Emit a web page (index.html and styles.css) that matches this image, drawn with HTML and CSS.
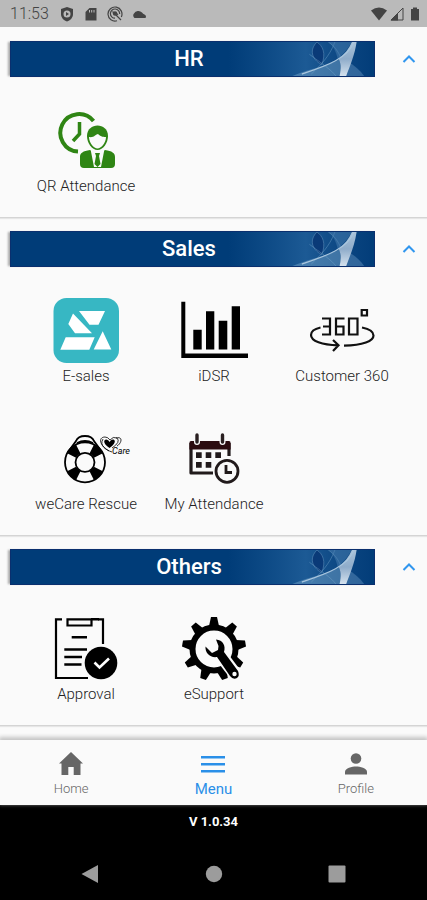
FILE: index.html
```html
<!DOCTYPE html>
<html lang="en">
<head>
<meta charset="utf-8">
<meta name="viewport" content="width=device-width, initial-scale=1">
<title>Menu</title>
<link rel="stylesheet" href="styles.css">
</head>
<body>
<svg class="defs" aria-hidden="true">
  <defs>
    <linearGradient id="glow" x1="0" x2="1" y1="0" y2="0">
      <stop offset="0" stop-color="#2a6aa5" stop-opacity="0"/>
      <stop offset=".55" stop-color="#2f6ea8" stop-opacity=".6"/>
      <stop offset="1" stop-color="#0d4380" stop-opacity=".3"/>
    </linearGradient>
    <linearGradient id="blade" x1="0" x2="0" y1="0" y2="1">
      <stop offset="0" stop-color="#a9c2d9"/>
      <stop offset=".5" stop-color="#8facca"/>
      <stop offset="1" stop-color="#d5e2ee"/>
    </linearGradient>
    <symbol id="waves" viewBox="0 0 150 36">
      <rect width="150" height="36" fill="url(#glow)"/>
      <g transform="translate(2 0)">
        <path d="M66 36C88 27 108 24 116 18L118 36Z" fill="#6f9fc6" opacity=".5"/>
        <path d="M92 0C84 8 86 18 97 24C102 12 98 4 92 0Z" fill="#0a3a78"/>
        <path d="M92 0C84 8 86 18 97 24C102 12 98 4 92 0ZM104 0C112 5 117 14 118 20M84 13C96 22 108 30 112 36M111 0C105 16 96 24 86 34" fill="none" stroke="#76a5cc" stroke-opacity=".45"/>
        <path d="M104 0H129C123 10 118 15 114 18C112 9 109 4 104 0Z" fill="#4a7fb2" opacity=".5"/>
        <path d="M124 20C132 25 138 30 142 36H122Z" fill="#5c8cba" opacity=".5"/>
        <path d="M129 0H134C132 14 127 25 123 36H116C118 28 117 21 115 18C121 13 126 7 129 0Z" fill="url(#blade)"/>
        <path d="M76 34C102 25 124 18 131 0" fill="none" stroke="#a9c6de" stroke-width="1.300"/>
      </g>
    </symbol>
    <symbol id="chevron" viewBox="0 0 16 16"><path d="M2.500 11L8 5.500L13.500 11" fill="none" stroke="#3096ee" stroke-width="2"/></symbol>
  </defs>
</svg>

<header class="status">
  <div class="status-group">
    <time class="clock">11:53</time>
    <svg viewBox="0 0 16 16" width="16" height="16"><path d="M8 1L14 3V8C14 12 11 14.500 8 15.500C5 14.500 2 12 2 8V3Z"/><circle cx="8" cy="8" r="3.500" fill="#bababa"/><path d="M7 6L10 8L7 10Z"/></svg>
    <svg viewBox="0 0 16 16" width="16" height="16"><path d="M6.500 2H13.500V14.500H2.500V6Z"/><path d="M6.500 4V6.500M8.700 4V6.500M11 4V6.500" stroke="#bababa"/></svg>
    <svg viewBox="0 0 16 16" width="16" height="16"><g fill="none" stroke="#444" stroke-width="1.200"><path d="M10 14.700A7 7 0 1 1 14.300 11M8 12.200A4.600 4.600 0 1 1 12.600 8"/><path d="M5.500 5.500L14 14M9 6.500L11 9"/></g><circle cx="8" cy="7.500" r="2.200"/></svg>
    <svg viewBox="0 0 16 16" width="16" height="16"><path d="M3.500 12A3 3 0 0 1 3 7.500A5 5 0 0 1 11 6.500Q12 8 13.500 8.500A2.500 2.500 0 0 1 14.500 12Z"/></svg>
  </div>
  <div class="status-group right">
    <svg viewBox="0 0 16 16" width="16" height="16"><path d="M0 4.500Q8-1.500 16 4.500L8 14.500Z"/></svg>
    <svg viewBox="0 0 16 16" width="16" height="16"><path d="M2 14L14 2V14Z" fill="none" stroke="#444"/><path d="M1.500 14.500L9 7V14.500Z"/></svg>
    <svg viewBox="0 0 16 16" width="16" height="16"><path d="M4 3H6V1.500H10V3H12V14.500H4Z"/></svg>
  </div>
</header>

<main>
  <section>
    <h2><button class="section-head" type="button" aria-expanded="true">
      <span class="banner"><svg class="art"><use href="#waves"/></svg><span class="title">HR</span></span>
      <svg class="chevron"><use href="#chevron"/></svg>
    </button></h2>
    <div class="tiles">
      <a class="tile" href="#qr">
        <svg viewBox="0 0 128 66" fill="#2f8514">
          <path d="M71.500 14A18.700 18.700 0 1 0 56 44.500" fill="none" stroke="#2f8514" stroke-width="4"/>
          <path d="M57.500 15V27L51 34" fill="none" stroke="#2f8514" stroke-width="3.500"/>
          <ellipse cx="75.500" cy="30.500" rx="12.500" ry="14" fill="#fafafa"/>
          <path d="M65 29C65 15 86 15 86 29C86 36 81 43 75.500 43C70 43 65 36 65 29Z"/>
          <path d="M67 30C72 31 74 27 76 27C79 30 82 30 84 30C84 36 79 41.500 75.500 41.500C72 41.500 67 36 67 30Z" fill="#fafafa"/>
          <path d="M68 43L75.500 47L83 43C90 44 93 46 93 50V57Q93 61 89 61H62Q58 61 58 57V50C58 46 61 44 68 43Z"/>
          <path d="M68.500 42L75.500 45L82.500 42L79 60H72Z" fill="#fafafa"/>
          <path d="M73 46H78L77 49L78.500 57L75.500 60L72.500 57L74 49Z"/>
        </svg>
        <span>QR Attendance</span>
      </a>
    </div>
  </section>

  <section>
    <h2><button class="section-head" type="button" aria-expanded="true">
      <span class="banner"><svg class="art"><use href="#waves"/></svg><span class="title">Sales</span></span>
      <svg class="chevron"><use href="#chevron"/></svg>
    </button></h2>
    <div class="tiles">
      <a class="tile" href="#esales">
        <svg viewBox="0 0 128 66">
          <rect x="31.500" y="1" width="65.500" height="65" rx="13" fill="#37b7c3"/>
          <path d="M57 14H83L76.500 27.700H67.500ZM51 16.500L70 36.300H53L46.300 27ZM43.700 40.300H72.700L67.300 52.700H38.300ZM80.700 34.300L89.300 52.500H71.700Z" fill="#fff"/>
        </svg>
        <span>E-sales</span>
      </a>
      <a class="tile" href="#idsr">
        <svg viewBox="0 0 128 66"><path d="M31.300 4.700H35.300V56.500H98V61H31.300ZM43.300 32.700H51.700V52.500H43.300ZM56 14.300H64.300V52.500H56ZM68.700 23.700H77.300V52.500H68.700ZM81.700 9.300H90V52.500H81.700Z"/></svg>
        <span>iDSR</span>
      </a>
      <a class="tile" href="#customer">
        <svg viewBox="0 0 128 66" fill="none" stroke="#111" stroke-width="2.200">
          <path d="M44 21.500H52V37.500H44M45 29.500H52M66.500 21.500H58V37.500H65.500V29.500H58M71 21.500H79.500V37.500H71Z"/>
          <path d="M83.700 13H89V18.500H83.700Z"/>
          <path d="M42.500 30.500C36 32 33 35 33 38C33 44 44 48 60 48.300M55 43L60.500 48.300L55 54M84 30.500C92 32 95.500 35 95.500 38.500C95.500 44 85 48.500 66 48.700"/>
        </svg>
        <span>Customer 360</span>
      </a>
      <a class="tile" href="#rescue">
        <svg viewBox="0 0 128 66">
          <g fill="none" stroke="#000">
            <path d="M46 27L54 16Q56 11 63 11Q70 11 72 16L80 27M55 18Q63 14 71 18" stroke-width="1.800"/>
            <circle cx="63" cy="37.300" r="20" stroke-width="1.800"/>
            <circle cx="63" cy="37.300" r="9.500" stroke-width="1.800"/>
            <circle cx="63" cy="37.300" r="15" stroke-width="10" pathLength="360" stroke-dasharray="36 54" stroke-dashoffset="-27"/>
            <path d="M87 26C76 19 77 12 83 12Q86 12 88 15Q91 11 95 13Q99 17 90 23M94 13C102 11 99 19 95 21M81 14C77 21 84 25 90 27" stroke-width=".8"/>
          </g>
          <path d="M87.500 23C80 18 82 14 84.500 14.500Q87 15 87.500 17Q89 14 91.500 14.500C95 16 91 21 87.500 23Z"/>
          <text class="logo-word" x="90" y="29">Care</text>
        </svg>
        <span>weCare Rescue</span>
      </a>
      <a class="tile" href="#attendance">
        <svg viewBox="0 0 128 66" fill="#211a1b">
          <path d="M41 18V48H63M79 18V31" fill="none" stroke="#211a1b" stroke-width="3.200" stroke-linejoin="round"/>
          <path d="M41 16H79Q80.600 16 80.600 18V24.500H39.400V18Q39.400 16 41 16Z" fill="#2b0c10"/>
          <path d="M47 10V17M72.500 10V17" stroke="#fafafa" stroke-width="6" stroke-linecap="round"/>
          <path d="M47 10V17M72.500 10V17" stroke="#2a2021" stroke-width="3.400" stroke-linecap="round"/>
          <path d="M46 27.300H51.700V33H46ZM55.700 27.300H61.300V33H55.700ZM65.300 27.300H71V33H65.300ZM46 37H51.700V42.700H46ZM55.700 37H61.300V42.700H55.700Z"/>
          <circle cx="77" cy="46.300" r="14" fill="#fafafa"/>
          <circle cx="77" cy="46.300" r="11" fill="none" stroke="#211a1b" stroke-width="2.800"/>
          <path d="M76 40V47.500H82" fill="none" stroke="#211a1b" stroke-width="2.800"/>
        </svg>
        <span>My Attendance</span>
      </a>
    </div>
  </section>

  <section>
    <h2><button class="section-head" type="button" aria-expanded="true">
      <span class="banner"><svg class="art"><use href="#waves"/></svg><span class="title">Others</span></span>
      <svg class="chevron"><use href="#chevron"/></svg>
    </button></h2>
    <div class="tiles">
      <a class="tile" href="#approval">
        <svg viewBox="0 0 128 66">
          <g fill="none" stroke="#000" stroke-width="2.200">
            <path d="M40 4.300H34V63H66M76 4.300H81V29M45.500 4.300H69.500V10.500H45.500Z"/>
            <path d="M69 4.300H77M49.700 22.300H65M42.300 34.500H65M42.300 42H60M42.300 49.500H59.500" stroke-width="2.400"/>
          </g>
          <circle cx="79" cy="48" r="16.300"/>
          <path d="M72.500 47.500L77.500 52.500L87 43.500" fill="none" stroke="#fff" stroke-width="2.600"/>
        </svg>
        <span>Approval</span>
      </a>
      <a class="tile" href="#support">
        <svg viewBox="0 0 128 66">
          <g transform="translate(64 34)">
            <circle r="21.500" fill="none" stroke="#000" stroke-width="6"/>
            <path id="tooth" d="M-5-23L-3-32H3L5-23Z"/>
            <use href="#tooth" transform="rotate(40)"/><use href="#tooth" transform="rotate(80)"/>
            <use href="#tooth" transform="rotate(120)"/><use href="#tooth" transform="rotate(160)"/>
            <use href="#tooth" transform="rotate(200)"/><use href="#tooth" transform="rotate(240)"/>
            <use href="#tooth" transform="rotate(280)"/><use href="#tooth" transform="rotate(320)"/>
          </g>
          <path d="M70 39L88 63" stroke="#fafafa" stroke-width="13"/>
          <path d="M66 24.500C73 25 76 31 74 37L88 56Q90 61 87 63Q83 65 80 61L67 42C60 43 55 38 55.500 31.500L62 38L68 35L68.500 31Z"/>
          <circle cx="84.500" cy="59" r="2.200" fill="#fafafa"/>
        </svg>
        <span>eSupport</span>
      </a>
    </div>
  </section>
</main>

<nav class="tabs">
  <a href="#home">
    <svg viewBox="0 0 32 32" width="32" height="32"><path d="M16 4L28 15.500H25.500V27H18.700V19H13.300V27H6.500V15.500H4Z"/></svg>
    <span>Home</span>
  </a>
  <a class="active" href="#menu" aria-current="page">
    <svg viewBox="0 0 32 32" width="32" height="32"><path d="M4 8H28V10.500H4ZM4 15H28V17.500H4ZM4 22H28V24.500H4Z"/></svg>
    <span>Menu</span>
  </a>
  <a href="#profile">
    <svg viewBox="0 0 32 32" width="32" height="32"><circle cx="16" cy="10.500" r="5.300"/><path d="M5 26.500V24C5 20 12 18.500 16 18.500C20 18.500 27 20 27 24V26.500Z"/></svg>
    <span>Profile</span>
  </a>
</nav>

<footer>
  <p class="version">V 1.0.34</p>
  <div class="system">
    <button type="button" aria-label="Back"><svg viewBox="0 0 20 20" width="20" height="20"><path d="M18 1V19L1.500 10Z"/></svg></button>
    <button type="button" aria-label="Home"><svg viewBox="0 0 20 20" width="20" height="20"><circle cx="10" cy="10" r="8.200"/></svg></button>
    <button type="button" aria-label="Recent apps"><svg viewBox="0 0 20 20" width="20" height="20"><rect x="1.500" y="1.500" width="17" height="17" rx="1"/></svg></button>
  </div>
</footer>
</body>
</html>
```
FILE: styles.css
```css
* { box-sizing: border-box; }

body {
  margin: 0;
  min-height: 100vh;
  display: flex;
  flex-direction: column;
  background: #fafafa;
  color: #222;
  font-family: Roboto, "Liberation Sans", sans-serif;
}

h2, p { margin: 0; }
a { color: inherit; text-decoration: none; }
button { border: 0; padding: 0; background: none; font: inherit; cursor: pointer; }
svg { display: block; }
.defs { position: absolute; width: 0; height: 0; }

.status {
  display: flex;
  justify-content: space-between;
  align-items: center;
  height: 27px;
  padding: 0 4px 0 10px;
  background: #bababa;
  color: #444;
}
.status svg { fill: #444; }
.status-group { display: flex; align-items: center; gap: 8px; }
.status-group.right { gap: 2px; }
.clock { width: 41px; font-size: 16px; line-height: 20px; font-weight: 300; }

main { flex: 1; padding: 1px 0 14px; }

section { border-bottom: 1px solid #d4d4d4; box-shadow: 0 1px 1px #e6e6e6; }

.section-head {
  display: flex;
  align-items: center;
  width: 100%;
  padding: 13px 10px 12px;
}
.banner {
  position: relative;
  flex: 1;
  height: 36px;
  background: #003c78;
  border: 1px solid #0a2f6e;
  box-shadow: -3px 0 2px -1px #aaa;
}
.art { position: absolute; right: 0; top: 0; width: 150px; height: 100%; }
.title {
  position: relative;
  display: block;
  padding-right: 7px;
  color: #fff;
  font-size: 22px;
  line-height: 34px;
  font-weight: 500;
  text-align: center;
}
.chevron { width: 16px; height: 16px; margin-left: 26px; }

.tiles {
  display: grid;
  grid-template-columns: repeat(3, 1fr);
  padding: 0 21px 0 22px;
}
.tile {
  height: 128px;
  padding-top: 18px;
  text-align: center;
  font-size: 15px;
  line-height: 18px;
  font-weight: 300;
}
.tile svg { width: 100%; height: 66px; margin-bottom: 4px; }
.tile span { display: block; white-space: nowrap; }
.logo-word { font: italic 9px Roboto, sans-serif; }

.tabs {
  position: relative;
  display: flex;
  height: 65px;
  background: #fafafa;
  box-shadow: 0 -2px 4px 1px #c4c4c4;
  color: #666;
}
.tabs a {
  flex: 1;
  display: flex;
  flex-direction: column;
  align-items: center;
  padding-top: 8px;
  font-size: 13px;
  line-height: 18px;
  font-weight: 300;
}
.tabs svg { fill: #666; }
.tabs .active { color: #2a8fe8; font-size: 15px; font-weight: 400; }
.tabs .active svg { fill: #2a8fe8; }

footer { height: 95px; background: #000; color: #fff; }
.version {
  padding-top: 8px;
  font-size: 13px;
  line-height: 18px;
  font-weight: 700;
  text-align: center;
}
.system { display: flex; padding: 33px 28px 0; }
.system button { flex: 1; display: flex; justify-content: center; }
.system svg { fill: #9c9c9c; }
```
